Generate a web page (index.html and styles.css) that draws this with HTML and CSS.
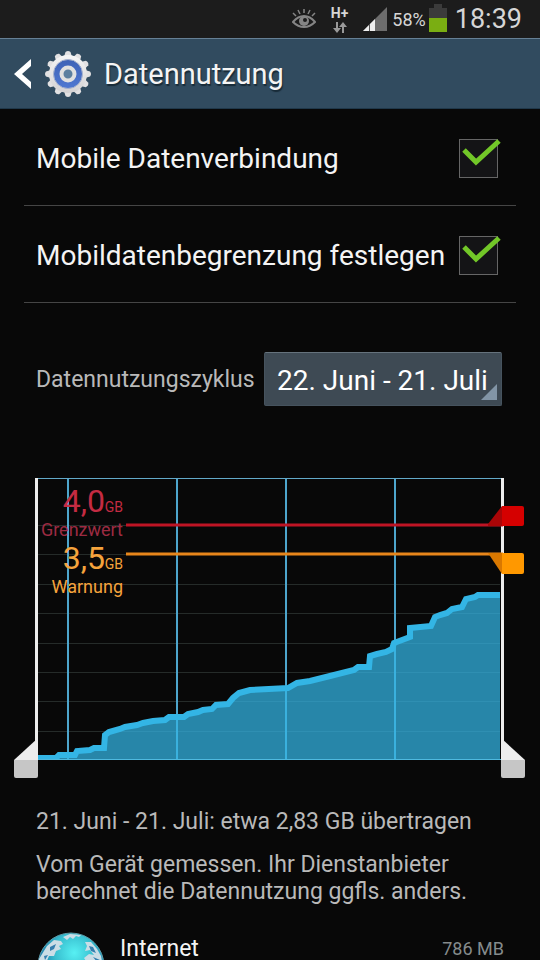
FILE: index.html
```html
<!DOCTYPE html>
<html lang="de">
<head>
<meta charset="utf-8">
<meta name="viewport" content="width=device-width, initial-scale=1">
<title>Datennutzung</title>
<link rel="stylesheet" href="styles.css">
</head>
<body>
<div class="statusbar">
  <svg class="eye" width="24" height="20" viewBox="0 0 24 20" fill="none" stroke="#858585">
    <path d="M1 13Q6 7 12 7T23 13Q18 18 12 18T1 13Z" stroke-width="2"/>
    <circle cx="12" cy="12" r="5" fill="#858585" stroke="none"/>
    <circle cx="13" cy="11" r="2" fill="#1c1c1c" stroke="none"/>
    <path d="M1 4l3 3M6 1l2 4M12 0v4M18 1l-2 4M23 4l-3 3" stroke-width="1.5"/>
  </svg>
  <div class="network">
    <span>H+</span>
    <svg width="14" height="11" viewBox="0 0 14 11" fill="#999"><path d="M3 0h2v6h3L4 11 0 6h3zM9 11h2V5h3L10 0 6 5h3z"/></svg>
  </div>
  <svg class="signal" width="24" height="24" viewBox="0 0 24 24"><path d="M0 24L24 0V24Z" fill="#6d6d6d"/><path d="M0 24L12 12V24Z" fill="#eee"/><path d="M6.5 17V24" stroke="#555"/></svg>
  <span class="percent">58%</span>
  <svg class="battery" width="18" height="28" viewBox="0 0 18 28"><path d="M0 4H5V0H13V4H18V28H0Z" fill="#3b3b3b"/><path d="M0 14H18V28H0Z" fill="#7aae12"/></svg>
  <span class="clock">18:39</span>
</div>
<header class="header">
  <button class="back" aria-label="Zurück">
    <svg width="18" height="30" viewBox="0 0 18 30"><path d="M17 0V7L8 15 17 23V30L0 15Z" fill="#fff"/></svg>
  </button>
  <svg class="gear" width="48" height="48" viewBox="-24 -24 48 48">
    <defs>
      <linearGradient id="metal" x1="0" y1="0" x2="0" y2="1"><stop offset="0" stop-color="#f5f5f5"/><stop offset="1" stop-color="#d4d2d3"/></linearGradient>
      <linearGradient id="blue" x1="0" y1="0" x2="0" y2="1"><stop offset="0" stop-color="#3e62b6"/><stop offset="1" stop-color="#4f78d2"/></linearGradient>
      <path id="tooth" d="M-4 -17L-2.5 -22Q0 -24 2.5 -22L4 -17Z"/>
    </defs>
    <g fill="#e2e1e2">
      <use href="#tooth"/><use href="#tooth" transform="rotate(30)"/><use href="#tooth" transform="rotate(60)"/><use href="#tooth" transform="rotate(90)"/><use href="#tooth" transform="rotate(120)"/><use href="#tooth" transform="rotate(150)"/><use href="#tooth" transform="rotate(180)"/><use href="#tooth" transform="rotate(210)"/><use href="#tooth" transform="rotate(240)"/><use href="#tooth" transform="rotate(270)"/><use href="#tooth" transform="rotate(300)"/><use href="#tooth" transform="rotate(330)"/>
    </g>
    <circle r="19" fill="url(#metal)"/>
    <circle r="14.500" fill="url(#blue)" stroke="#a9b4ce"/>
    <circle r="6.500" fill="#5c7f9f" stroke="#e0e0e0" stroke-width="4"/>
  </svg>
  <h1>Datennutzung</h1>
</header>
<main class="content">
  <div class="setting">
    <label for="mobile">Mobile Datenverbindung</label>
    <span class="check"><input type="checkbox" id="mobile" checked><svg width="40" height="32" viewBox="0 0 40 32"><path d="M3 11L15 23 38 2" fill="none" stroke="#72c728" stroke-width="5"/></svg></span>
  </div>
  <div class="setting">
    <label for="limit">Mobildatenbegrenzung festlegen</label>
    <span class="check"><input type="checkbox" id="limit" checked><svg width="40" height="32" viewBox="0 0 40 32"><path d="M3 11L15 23 38 2" fill="none" stroke="#72c728" stroke-width="5"/></svg></span>
  </div>
  <div class="cycle">
    <label for="cycle">Datennutzungszyklus</label>
    <span class="picker"><select id="cycle"><option>22. Juni - 21. Juli</option></select></span>
  </div>
  <svg class="chart" viewBox="0 470 540 320" role="img" aria-label="Datennutzung 21. Juni - 21. Juli">
    <path d="M38 525.500H500M38 554.500H500M38 584.500H500M38 613.500H500M38 643.500H500M38 672.500H500M38 701.500H500M38 731.500H500" stroke="#252b29"/>
    <path d="M36 478.500H501M36 759.500H501" stroke="#62a9c9"/>
    <path d="M68 479V759M177 479V759M286 479V759M395 479V759" stroke="#4da5cc" stroke-width="2"/>
    <path d="M38 760V758H56L59 755H75L77 751 90 750 94 748H104L105 735 109 732 120 729 125 727 137 725 143 723 153 721 165 720 169 717H184L188 714 198 712 203 710 212 709 216 705 228 704 233 698 239 693 250 690 288 688 297 683 310 681 330 676 354 670 358 667H369L370 656 377 654 386 652 392 649 394 643 402 640 410 637V628L431 626 435 617 440 615 447 613 452 609 462 607 466 599 475 597 478 595H500V760Z" fill="#33b5e5" fill-opacity=".73"/>
    <path d="M38 758H56L59 755H75L77 751 90 750 94 748H104L105 735 109 732 120 729 125 727 137 725 143 723 153 721 165 720 169 717H184L188 714 198 712 203 710 212 709 216 705 228 704 233 698 239 693 250 690 288 688 297 683 310 681 330 676 354 670 358 667H369L370 656 377 654 386 652 392 649 394 643 402 640 410 637V628L431 626 435 617 440 615 447 613 452 609 462 607 466 599 475 597 478 595H500" fill="none" stroke="#33b5e5" stroke-width="6"/>
    <path d="M30 760H510V767H30Z" fill="#080808"/>
    <path d="M38 759.500H501" stroke="#4fb9df"/>
    <path d="M36.500 478V760M502.500 478V760" stroke="#ededed" stroke-width="3"/>
    <path d="M38 738V760H14Z" fill="#ededed"/><path d="M14 760H38V776Q38 778 36 778H16Q14 778 14 776Z" fill="#c6c6c6"/>
    <path d="M501 738V760H525Z" fill="#ededed"/><path d="M501 760H525V776Q525 778 523 778H503Q501 778 501 776Z" fill="#c6c6c6"/>
    <path d="M126 525H503" stroke="#be1424" stroke-width="3"/>
    <path d="M488 524L502 506V526H488Z" fill="#a90507"/><path d="M502 506H522Q524 506 524 508V524Q524 526 522 526H502Z" fill="#d50000"/>
    <path d="M126 554H503" stroke="#e7861b" stroke-width="3"/>
    <path d="M488 553H502V574Z" fill="#d97800"/><path d="M502 553H522Q524 553 524 555V572Q524 574 522 574H502Z" fill="#ff9800"/>
    <g text-anchor="end" class="limit-label"><text x="105" y="512" class="value">4,0</text><text x="123" y="512" class="unit">GB</text><text x="123" y="536" class="name">Grenzwert</text></g>
    <g text-anchor="end" class="warning-label"><text x="105" y="569" class="value">3,5</text><text x="123" y="569" class="unit">GB</text><text x="123" y="593" class="name">Warnung</text></g>
  </svg>
  <div class="summary">
    <p>21. Juni - 21. Juli: etwa 2,83 GB übertragen</p>
    <p>Vom Gerät gemessen. Ihr Dienstanbieter berechnet die Datennutzung ggfls. anders.</p>
  </div>
  <div class="app">
    <svg class="globe" width="70" height="70" viewBox="0 0 70 70">
      <defs><radialGradient id="sea" cx=".55" cy=".3" r=".6"><stop offset="0" stop-color="#57f0f3"/><stop offset=".5" stop-color="#37bdce"/><stop offset="1" stop-color="#15679f"/></radialGradient></defs>
      <circle cx="35" cy="35" r="33" fill="url(#sea)" stroke="#5d9ba8"/>
      <g fill="#cbdde6"><path d="M11 15L18 9 25 10 27 13 23 15 25 18 20 20 18 25 13 25 10 32 4 36 3 28Z"/><path d="M27 6L34 3 45 4 43 6 40 5 37 8 34 6 31 9Z"/><path d="M49 11L55 11 61 18 65 25 67 36 60 40 52 33 48 27 53 23 58 24 54 19 49 20 51 15Z"/></g>
      <path d="M14 16l6-3-2 5-4 2zM53 15l4 1 3 6-5-2zM57 26l7 3-2 3zM8 25l4-1-3 5z" fill="#347eae"/>
    </svg>
    <span class="app-name">Internet</span>
    <span class="app-size">786 MB</span>
  </div>
</main>
</body>
</html>
```
FILE: styles.css
```css
* { box-sizing: border-box; }
body {
  margin: 0;
  height: 100vh;
  display: flex;
  flex-direction: column;
  overflow: hidden;
  background: #080808;
  color: #f4f4f4;
  font-family: Roboto, "Liberation Sans", sans-serif;
}
.statusbar {
  flex: none;
  height: 38px;
  display: flex;
  align-items: center;
  justify-content: flex-end;
  padding-right: 18px;
  background: #1c1c1c;
  color: #d6d6d6;
}
.network {
  display: flex;
  flex-direction: column;
  align-items: center;
  gap: 2px;
  margin: 0 15px;
  font-size: 14px;
  line-height: 14px;
  font-weight: 700;
}
.percent { margin: 0 3px 0 5px; font-size: 18px; }
.battery { margin-bottom: 2px; }
.clock { margin-left: 8px; font-size: 27px; line-height: 36px; }
.header {
  flex: none;
  height: 71px;
  display: flex;
  align-items: center;
  border-top: 1px solid #668095;
  border-bottom: 1px solid #20384a;
  background: #314b5f;
}
.back {
  display: flex;
  margin-left: 14px;
  padding: 0;
  border: 0;
  background: none;
}
.gear { margin: 0 12px; }
h1 { margin: 0; font-size: 29px; font-weight: 400; text-shadow: 1px 2px 1px #182b38; }
.content { flex: 1; min-height: 0; overflow: hidden; }
.setting {
  display: flex;
  align-items: center;
  justify-content: space-between;
  height: 97px;
  margin: 0 24px;
  padding: 2px 18px 0 12px;
  border-bottom: 1px solid #454545;
  font-size: 28px;
  white-space: nowrap;
}
.check { position: relative; display: flex; }
.check input {
  appearance: none;
  width: 39px;
  height: 39px;
  margin: 0;
  border: 1px solid #666;
  background: #141416;
}
.check svg { position: absolute; left: 2px; top: 0; pointer-events: none; }
.check input:not(:checked) + svg { display: none; }
.cycle {
  display: flex;
  align-items: center;
  justify-content: space-between;
  margin: 49px 38px 64px 36px;
  color: #b9b9b9;
  font-size: 23px;
}
.picker { position: relative; }
.picker::after {
  content: "";
  position: absolute;
  right: 5px;
  bottom: 6px;
  width: 16px;
  height: 16px;
  background: #8295a6;
  clip-path: polygon(100% 0, 100% 100%, 0 100%);
  pointer-events: none;
}
.picker select {
  appearance: none;
  display: block;
  width: 238px;
  height: 54px;
  padding: 2px 12px 0;
  border: 1px solid #46535e;
  border-top-color: #65727c;
  border-radius: 2px;
  background: #3e4a54;
  color: #fff;
  font: 28px Roboto, sans-serif;
}
.chart { display: block; width: 100%; }
.limit-label { fill: #c42b42; }
.warning-label { fill: #f5a33c; }
.value { font-size: 32px; }
.unit { font-size: 14px; }
.name { font-size: 18px; }
.limit-label .name { fill: #9d2b42; }
.summary { margin: 18px 36px 0; color: #b9b9b9; font-size: 23px; line-height: 27px; }
.summary p { margin: 0 0 16px; }
.app {
  display: flex;
  align-items: flex-start;
  margin: 26px 36px 0;
  line-height: 36px;
}
.app-name { flex: 1; margin-left: 14px; font-size: 23px; }
.app-size { color: #858b8c; font-size: 18px; }
```
